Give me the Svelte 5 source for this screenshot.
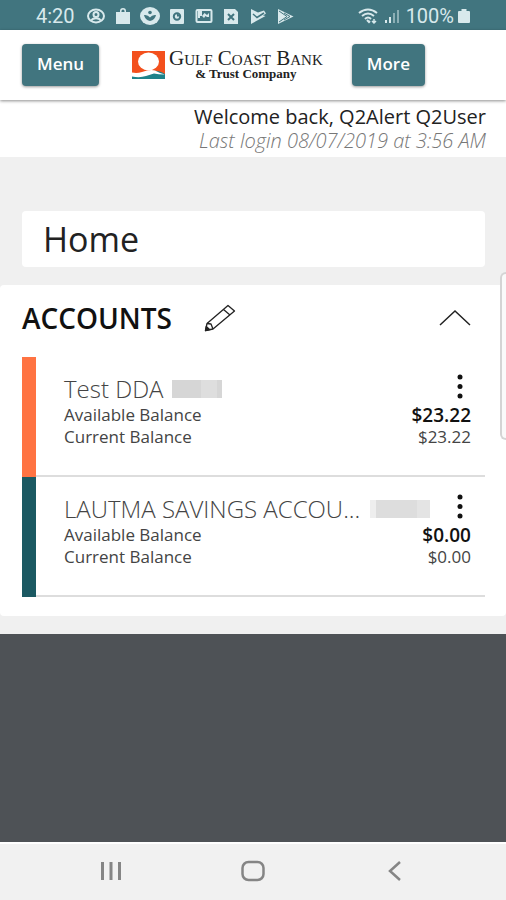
<script lang="ts">
    let open = $state(true);

    const accounts = [
        { name: 'Test DDA', tone: 'orange', mask: 'short', available: '$23.22', current: '$23.22' },
        { name: 'LAUTMA SAVINGS ACCOU...', tone: 'teal', mask: 'long', available: '$0.00', current: '$0.00' },
    ];
</script>

<div class="screen">
    <div class="status">
        <span class="time">4:20</span>
        <div class="notices">
            <svg viewBox="0 0 20 18" fill="none" stroke="currentColor" stroke-width="2">
                <ellipse cx="10" cy="9" rx="8" ry="6.5" />
                <circle cx="10" cy="7.5" r="2.5" />
                <path d="M5.5 13.5c1-3 8-3 9 0" />
            </svg>
            <svg viewBox="0 0 20 18" fill="currentColor">
                <path d="M3 5h4V4q0-3 3-3t3 3v1h4v12H3zM8.500 5h3V4q0-1.500-1.500-1.500T8.500 4z" />
            </svg>
            <svg viewBox="0 0 20 18">
                <ellipse cx="10" cy="9" rx="10" ry="9" fill="currentColor" />
                <path d="M4 8q4-.5 6 2.500Q12 7.500 16 8q-1 5-6 6-5-1-6-6z" fill="#41757f" />
                <circle cx="10" cy="5.500" r="1.800" fill="#41757f" />
            </svg>
            <svg viewBox="0 0 20 18">
                <rect x="3" y="2" width="14" height="15" rx="1" fill="currentColor" />
                <circle cx="10" cy="9.500" r="3.200" fill="none" stroke="#41757f" stroke-width="2" />
                <path d="M10 9.500V6l3.500 3.500z" fill="#41757f" />
            </svg>
            <svg viewBox="0 0 20 18">
                <rect x="2.500" y="3" width="15" height="12" rx="1" fill="none" stroke="currentColor" stroke-width="2" />
                <path d="M4 4h4v5H6v2H4zM8 9l2.500-3L13 8l2-2v4h-2l-1.500-1-1.500 2z" fill="currentColor" />
            </svg>
            <svg viewBox="0 0 20 18">
                <path d="M3 2h11l3 3v12H3z" fill="currentColor" />
                <path d="M7 7l6 6M13 7l-6 6" stroke="#41757f" stroke-width="2" />
            </svg>
            <svg viewBox="0 0 20 18">
                <path d="M3 2l7 3.500 6-2 2 3-3 2 2.500.5L3 17z" fill="currentColor" />
                <path d="M5 7l4 3.500L16 6" fill="none" stroke="#41757f" stroke-width="1.500" />
            </svg>
            <svg viewBox="0 0 20 18">
                <path d="M3 2l15.500 7.500L3 17z" fill="currentColor" />
                <path d="M4 4l8 5.500L4 15M9 6l6 3.500L9 13" fill="none" stroke="#41757f" stroke-width="1" />
            </svg>
        </div>
        <svg class="wifi" viewBox="0 0 22 18" fill="none" stroke="currentColor" stroke-width="2">
            <path d="M1 6q9-7 18 0M4 9q6-5 12 0M7 12q3-3 6 0" />
            <path d="M9 13l2 2 1-1" />
            <path d="M16 12v4M14 14l2 2 2-2" stroke-width="1.500" />
        </svg>
        <svg class="signal" viewBox="0 0 16 18" fill="currentColor">
            <path d="M1 13h2v3H1zM5 10h2v6H5z" />
            <path d="M9 6h2v10H9zM13 3h2v13h-2z" opacity="0.5" />
        </svg>
        <span class="percent">100%</span>
        <svg class="battery" viewBox="0 0 12 18" fill="currentColor">
            <path d="M3.500 2h5v2H11q1 0 1 1v10q0 1-1 1H1q-1 0-1-1V5q0-1 1-1h2.500z" />
        </svg>
    </div>

    <header>
        <button class="btn">Menu</button>
        <div class="brand">
            <svg viewBox="0 0 33 28">
                <rect width="33" height="28" fill="#f3501d" />
                <ellipse cx="16.500" cy="10.500" rx="10.500" ry="9" fill="#fff" />
                <path d="M0 24q6-2 12-2 5 0 9-2 5-1 12 3v5H0z" fill="#1d828a" />
                <path d="M0 21.500q5 1 10-.5 8-3 13-1.500 5 3 10 4-7 0-11-1-4 1-8 2.500-6 2-14 .5z" fill="#fff" />
            </svg>
            <div class="brand-text">
                <span class="bank">Gulf Coast Bank</span>
                <span class="trust">&amp; Trust Company</span>
            </div>
        </div>
        <button class="btn">More</button>
    </header>

    <div class="welcome">
        <p>Welcome back, Q2Alert Q2User</p>
        <p class="last">Last login 08/07/2019 at 3:56 AM</p>
    </div>

    <main>
        <h1>Home</h1>

        <section>
            <div class="section-head">
                <h2>ACCOUNTS</h2>
                <button class="icon" aria-label="Edit accounts">
                    <svg width="32" height="28" viewBox="0 0 32 28" fill="none" stroke="#222" stroke-width="1.300" stroke-linejoin="round">
                        <path d="M1.500 26.500L3 19.500 24 1.500l6.500 5.500L9 25z" />
                        <path d="M3 19.500l4 .5 2 5M19.500 5.500l6.500 5.500" />
                        <path d="M1.500 26.500l.8-4 3.500 3.200z" fill="#222" />
                    </svg>
                </button>
                <button class="icon toggle" aria-label="Toggle accounts" aria-expanded={open} onclick={() => (open = !open)}>
                    <svg width="32" height="18" viewBox="0 0 32 18" fill="none" stroke="#222" stroke-width="1.500">
                        <path d="M1 16L16 2l15 14" />
                    </svg>
                </button>
            </div>

            {#if open}
                <ul>
                    {#each accounts as account}
                        <li class={account.tone}>
                            <div class="account">
                                <div class="name">
                                    <h3>{account.name}</h3>
                                    <span class="mask {account.mask}"></span>
                                    <button class="icon more" aria-label="Account options">
                                        <svg width="6" height="26" viewBox="0 0 6 26" fill="#111">
                                            <circle cx="3" cy="3" r="2.500" />
                                            <circle cx="3" cy="12.500" r="2.500" />
                                            <circle cx="3" cy="22" r="2.500" />
                                        </svg>
                                    </button>
                                </div>
                                <dl>
                                    <dt>Available Balance</dt>
                                    <dd class="available">{account.available}</dd>
                                    <dt>Current Balance</dt>
                                    <dd>{account.current}</dd>
                                </dl>
                            </div>
                        </li>
                    {/each}
                </ul>
            {/if}
        </section>
        <div class="edge"></div>
    </main>

    <footer></footer>

    <nav>
        <button class="icon" aria-label="Recent apps">
            <svg width="24" height="22" viewBox="0 0 24 22" stroke="#858585" stroke-width="3">
                <path d="M3.500 2v18M12 2v18M20.500 2v18" />
            </svg>
        </button>
        <button class="icon" aria-label="Home screen">
            <svg width="24" height="22" viewBox="0 0 24 22" fill="none" stroke="#858585" stroke-width="2.500">
                <rect x="1.500" y="2" width="21" height="18" rx="6" />
            </svg>
        </button>
        <button class="icon" aria-label="Back">
            <svg width="24" height="22" viewBox="0 0 24 22" fill="none" stroke="#858585" stroke-width="2.500">
                <path d="M17 2L7 11l10 9" />
            </svg>
        </button>
    </nav>
</div>

<style>
:global(body) {
    margin: 0;
}
.screen {
    display: flex;
    flex-direction: column;
    min-height: 100vh;
    background: #f0f0f0;
    font-family: "Open Sans", "Noto Sans", sans-serif;
    color: #222;
}
h1, h2, h3, p, ul, dl, dd {
    margin: 0;
    padding: 0;
}
svg {
    display: block;
}
.status {
    display: flex;
    align-items: center;
    box-sizing: border-box;
    height: 30px;
    padding: 2px 36px 0;
    background: #41757f;
    color: #d8e9ec;
    font-family: Roboto, sans-serif;
    font-size: 20px;
}
.notices {
    display: flex;
    gap: 7px;
    margin: 0 auto 0 11px;
}
.notices svg {
    width: 20px;
    height: 18px;
}
.wifi {
    width: 22px;
    height: 18px;
    margin-right: 4px;
}
.signal {
    width: 16px;
    height: 18px;
    margin-right: 6px;
}
.battery {
    width: 12px;
    height: 18px;
    margin-left: 4px;
}
header {
    display: flex;
    align-items: center;
    box-sizing: border-box;
    height: 70px;
    padding: 0 22px;
    background: #fff;
    box-shadow: 0 1px 3px rgba(0,0,0,0.45);
    z-index: 1;
}
.btn {
    height: 42px;
    padding: 0 15px 3px;
    border: 0;
    border-radius: 4px;
    background: #41757f;
    box-shadow: 0 1px 3px rgba(0,0,0,0.4);
    color: #fff;
    font: 600 17px "Open Sans", sans-serif;
}
.brand {
    display: flex;
    align-items: center;
    gap: 4px;
    margin: 0 29px 0 33px;
}
.brand svg {
    width: 33px;
    height: 28px;
}
.brand-text {
    display: flex;
    flex-direction: column;
    align-items: center;
    font-family: "Liberation Serif", serif;
    color: #222;
    white-space: nowrap;
}
.bank {
    font-size: 21px;
    line-height: 18px;
    font-variant: small-caps;
}
.trust {
    font-size: 13px;
    line-height: 14px;
    font-weight: 700;
}
.welcome {
    padding: 5px 20px 4px;
    background: #fff;
    text-align: right;
    font-size: 20px;
    line-height: 24px;
}
.last {
    color: #777;
    font-style: italic;
    font-weight: 300;
}
main {
    position: relative;
    padding: 54px 0 18px;
}
h1 {
    margin: 0 21px 18px 22px;
    padding: 0 21px;
    border-radius: 4px;
    background: #fff;
    font-size: 34px;
    line-height: 56px;
    font-weight: 400;
}
section {
    padding: 0 21px 19px 22px;
    border-radius: 4px;
    background: #fff;
}
.section-head {
    display: flex;
    align-items: center;
    box-sizing: border-box;
    height: 72px;
    padding: 0 14px 6px 0;
}
h2 {
    margin-right: 32px;
    font-size: 28px;
    line-height: 32px;
    font-weight: 600;
    color: #111;
}
.icon {
    padding: 0;
    border: 0;
    background: none;
}
.toggle {
    margin-left: auto;
}
ul {
    list-style: none;
}
li {
    border-left: 14px solid;
}
.orange {
    border-left-color: #ff7342;
}
.teal {
    border-left-color: #1b5962;
}
.account {
    padding: 17px 14px 27px 28px;
    border-bottom: 2px solid #ddd;
}
.name {
    display: flex;
    align-items: center;
    height: 30px;
}
h3 {
    font-size: 24px;
    line-height: 30px;
    font-weight: 300;
    color: #444;
    white-space: nowrap;
}
.mask {
    flex: none;
    height: 18px;
}
.short {
    width: 50px;
    margin-left: 8px;
    background: linear-gradient(90deg, #d6d6d6 58%, #dedede 58%, #dedede 90%, #d6d6d6 90%);
}
.long {
    width: 60px;
    margin-left: 10px;
    background: linear-gradient(90deg, #eee 10%, #ddd 10%, #ddd 78%, #e4e4e4 78%);
}
.more {
    align-self: flex-start;
    margin: 0 8px 0 auto;
}
dl {
    display: grid;
    grid-template-columns: 1fr auto;
    font-size: 17px;
    line-height: 22px;
    color: #444;
}
dd {
    text-align: right;
}
.available {
    font-size: 19px;
    font-weight: 600;
    color: #111;
}
/* edge panel handle, half off the screen */
.edge {
    position: absolute;
    top: 115px;
    right: 0;
    box-sizing: border-box;
    width: 6px;
    height: 168px;
    border: 2px solid #d4d4d4;
    border-right: 0;
    border-radius: 6px 0 0 6px;
    background: #fafafa;
}
footer {
    flex: 1;
    background: #4e5256;
}
nav {
    display: flex;
    align-items: center;
    justify-content: space-between;
    height: 58px;
    padding: 0 99px;
    background: #f1f1f1;
    box-shadow: inset 0 2px #fff;
}
</style>
